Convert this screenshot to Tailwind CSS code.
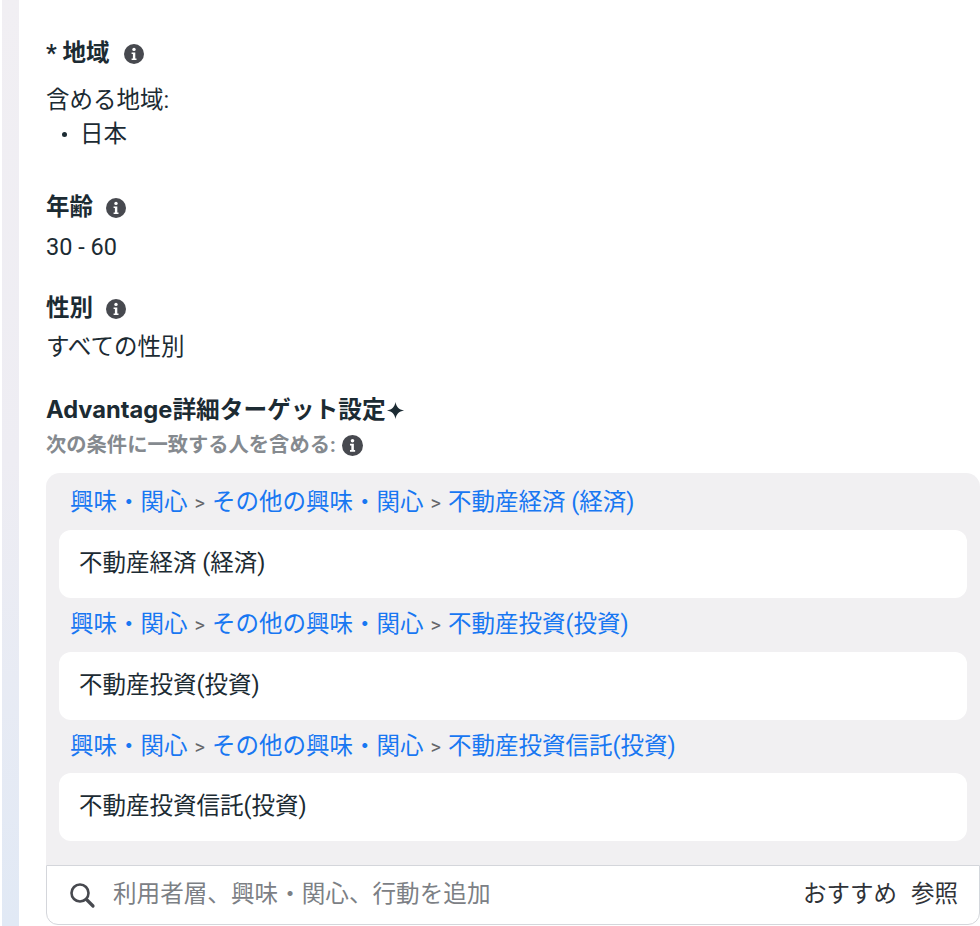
<!DOCTYPE html>
<html lang="ja">

<head>
    <meta charset="UTF-8">
    <title>Audience</title>
    <script src="https://cdn.jsdelivr.net/npm/@tailwindcss/browser@4"></script>
</head>

<body class="bg-white text-[#1c2b33] font-['Roboto','Noto_Sans_CJK_JP',sans-serif]">
    <div class="w-[980px] h-[926px] overflow-hidden flex">
        <!-- left strip -->
        <div class="ml-[2px] w-[17px] h-full shrink-0 bg-linear-to-b from-[#f1eff3] via-[#eeedf3] to-[#e1e9f5]"></div>

        <div class="pl-[27px] pt-[40px] flex-1 min-w-0">
            <!-- region -->
            <div class="flex items-center h-[28px] text-[23.5px] font-bold">
                <span>* 地域</span>
                <svg class="ml-[14px]" width="20" height="20" viewBox="0 0 20 20"><circle cx="10" cy="10" r="10" fill="#47494f"/><circle cx="10" cy="5.4" r="1.7" fill="#fff"/><path d="M7.6 8.4h3.7v6h1.2v1.6H7.6v-1.6h1.3V10H7.6z" fill="#fff"/></svg>
            </div>
            <p class="mt-[15px] h-[34px] leading-[34px] text-[23.5px]">含める地域:</p>
            <p class="h-[34px] leading-[34px] text-[23.5px] pl-[16px] flex items-center"><span class="w-[5px] h-[5px] rounded-full bg-[#1c2b33] mr-[13px]"></span>日本</p>

            <!-- age -->
            <div class="mt-[43px] flex items-center h-[28px] text-[23.5px] font-bold">
                <span>年齢</span>
                <svg class="ml-[13px]" width="20" height="20" viewBox="0 0 20 20"><circle cx="10" cy="10" r="10" fill="#47494f"/><circle cx="10" cy="5.4" r="1.7" fill="#fff"/><path d="M7.6 8.4h3.7v6h1.2v1.6H7.6v-1.6h1.3V10H7.6z" fill="#fff"/></svg>
            </div>
            <p class="mt-[7px] h-[36px] leading-[36px] text-[23.5px]">30 - 60</p>

            <!-- gender -->
            <div class="mt-[30px] flex items-center h-[28px] text-[23.5px] font-bold">
                <span>性別</span>
                <svg class="ml-[13px]" width="20" height="20" viewBox="0 0 20 20"><circle cx="10" cy="10" r="10" fill="#47494f"/><circle cx="10" cy="5.4" r="1.7" fill="#fff"/><path d="M7.6 8.4h3.7v6h1.2v1.6H7.6v-1.6h1.3V10H7.6z" fill="#fff"/></svg>
            </div>
            <p class="mt-[6px] h-[36px] leading-[36px] text-[23.5px]">すべての性別</p>

            <!-- detailed targeting -->
            <div class="mt-[30px] flex items-center h-[30px] text-[23.7px] font-bold font-['Inter','Noto_Sans_CJK_JP',sans-serif]">
                <span>Advantage詳細ターゲット設定</span>
                <svg width="19" height="19" viewBox="0 0 20 20"><path d="M10 1c.9 5.2 3.4 7.9 9 9-5.600 1.100-8.100 3.800-9 9-.9-5.200-3.400-7.900-9-9 5.600-1.100 8.100-3.800 9-9z" fill="#1c2b33"/></svg>
            </div>
            <div class="mt-[6px] flex items-center h-[28px] text-[20.3px] font-bold text-[#858a8f]">
                <span>次の条件に一致する人を含める:</span>
                <svg class="ml-[6px]" width="21" height="21" viewBox="0 0 20 20"><circle cx="10" cy="10" r="10" fill="#47494f"/><circle cx="10" cy="5.4" r="1.7" fill="#fff"/><path d="M7.6 8.4h3.7v6h1.2v1.6H7.6v-1.6h1.3V10H7.6z" fill="#fff"/></svg>
            </div>

            <!-- selected list -->
            <div class="mt-[14px] bg-[#f1f0f2] rounded-t-[14px] px-[13px] pb-[24px]">
                <div class="h-[59px] pl-[11px] flex items-center text-[23.5px] text-[#1877f2]">興味・関心<span class="text-[#65676b] text-[20px] mx-[7px]">&gt;</span>その他の興味・関心<span class="text-[#65676b] text-[20px] mx-[7px]">&gt;</span>不動産経済 (経済)</div>
                <div class="-mt-[2px] h-[68px] bg-white rounded-[12px] pl-[20px] flex items-center text-[23.5px]">不動産経済 (経済)</div>
                <div class="h-[54px] pl-[11px] flex items-center text-[23.5px] text-[#1877f2]">興味・関心<span class="text-[#65676b] text-[20px] mx-[7px]">&gt;</span>その他の興味・関心<span class="text-[#65676b] text-[20px] mx-[7px]">&gt;</span>不動産投資(投資)</div>
                <div class="h-[68px] bg-white rounded-[12px] pl-[20px] flex items-center text-[23.5px]">不動産投資(投資)</div>
                <div class="h-[53px] pl-[11px] flex items-center text-[23.5px] text-[#1877f2]">興味・関心<span class="text-[#65676b] text-[20px] mx-[7px]">&gt;</span>その他の興味・関心<span class="text-[#65676b] text-[20px] mx-[7px]">&gt;</span>不動産投資信託(投資)</div>
                <div class="h-[68px] bg-white rounded-[12px] pl-[20px] flex items-center text-[23.5px]">不動産投資信託(投資)</div>
            </div>

            <!-- search -->
            <div class="h-[60px] border border-[#d4d6db] rounded-b-[12px] bg-white flex items-center pl-[21px] pr-[21px]">
                <svg width="28" height="28" viewBox="0 0 28 28" fill="none" stroke="#47494f"><circle cx="12" cy="12" r="8.500" stroke-width="2.600"/><path d="M18.500 18.500L25 25" stroke-width="3.200" stroke-linecap="round"/></svg>
                <span class="ml-[17px] text-[23.6px] text-[#7c8085]">利用者層、興味・関心、行動を追加</span>
                <span class="ml-auto text-[23.5px] text-[#303338]">おすすめ</span>
                <span class="ml-[14px] text-[23.5px] text-[#303338]">参照</span>
            </div>
        </div>
    </div>
</body>

</html>
